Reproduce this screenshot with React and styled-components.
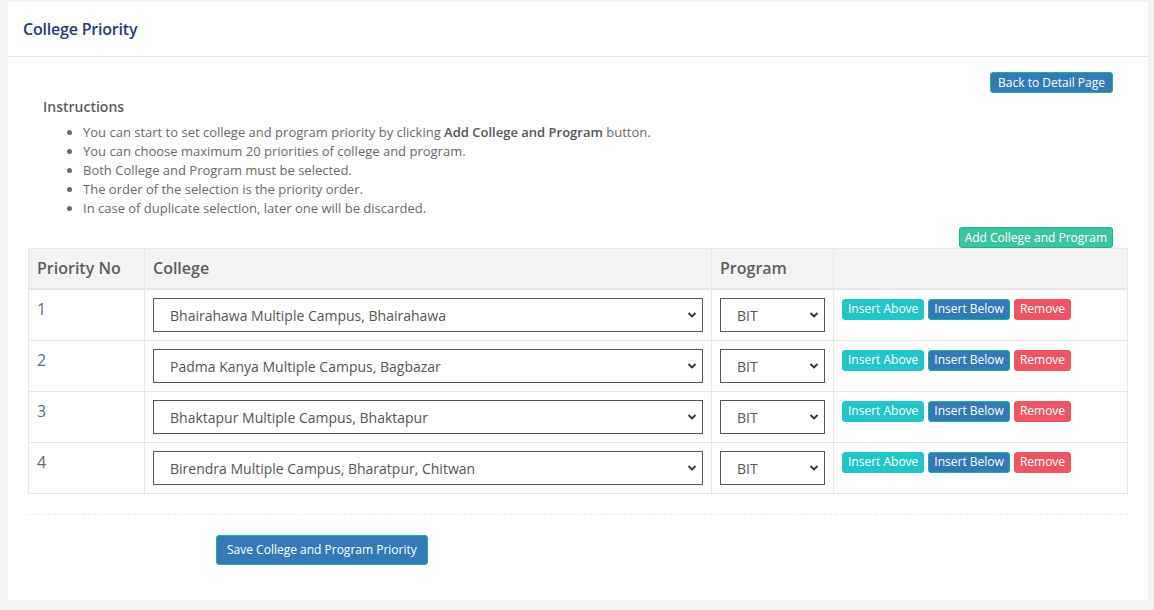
import React from "react";
import styled, { createGlobalStyle } from "styled-components";

const Global = createGlobalStyle`
  html, body { margin: 0; padding: 0; background: #f3f3f4; }
  body { font-family: "Open Sans", "Noto Sans", sans-serif; }
  * { box-sizing: border-box; }
`;

const Page = styled.div`
  padding: 2px 6px 10px 8px;
  height: 610px;
`;

const Card = styled.div`
  background: #fff;
  height: 598px;
  display: flex;
  flex-direction: column;
`;

const Header = styled.div`
  height: 55px;
  border-bottom: 1px solid #e7eaec;
  display: flex;
  align-items: center;
  padding: 0 15px;
`;

const Title = styled.h2`
  margin: 0;
  font-size: 16px;
  font-weight: 600;
  color: #283a7a;
  letter-spacing: -0.2px;
`;

const Body = styled.div`
  padding: 15px 20px 0 20px;
`;

const Inner = styled.div`
  padding: 0 15px;
`;

const RightRow = styled.div`
  display: flex;
  justify-content: flex-end;
`;

const Btn = styled.button`
  font-family: "Open Sans", "Noto Sans", sans-serif;
  font-size: 12px;
  line-height: 1;
  height: ${(p) => (p.$size === "md" ? "30px" : "21px")};
  padding: ${(p) => (p.$size === "md" ? "0 10px" : p.$pad || "0 5px")};
  border-radius: 3px;
  color: #fff;
  cursor: pointer;
  white-space: nowrap;
  background: ${(p) =>
    p.$variant === "primary"
      ? "#337ab7"
      : p.$variant === "success"
      ? "#3cc5a0"
      : p.$variant === "info"
      ? "#23c6c8"
      : "#ed5565"};
  border: 1px solid
    ${(p) =>
      p.$variant === "primary"
        ? "#1ab394"
        : p.$variant === "success"
        ? "#1ab394"
        : p.$variant === "info"
        ? "#23c6c8"
        : "#ed5565"};
`;

const InstrTitle = styled.h4`
  margin: 4px 0 0 0;
  font-size: 14px;
  font-weight: 600;
  color: #5e5e5e;
  line-height: 20px;
`;

const List = styled.ul`
  margin: 6px 0 0 0;
  padding-left: 40px;
  font-size: 13px;
  color: #676a6c;
  line-height: 19px;
  b { font-weight: 600; color: #555; }
`;

const AddRow = styled(RightRow)`
  margin-top: 9px;
`;

const Table = styled.table`
  width: 100%;
  border-collapse: collapse;
  border: 1px solid #e7e7e7;
`;

const Th = styled.th`
  background: #f3f3f3;
  text-align: left;
  font-size: 16px;
  font-weight: 600;
  color: #5e5e5e;
  height: 40px;
  padding: 0 8px;
  border: 1px solid #e7e7e7;
  border-bottom-width: 2px;
  width: ${(p) => p.$w || "auto"};
`;

const Td = styled.td`
  border: 1px solid #e7e7e7;
  padding: 8px;
  vertical-align: top;
  height: 51px;
`;

const Num = styled.div`
  font-size: 16px;
  color: #5c6b80;
  line-height: 22px;
`;

const SelectWrap = styled.div`
  position: relative;
  width: 100%;
`;

const Select = styled.select`
  appearance: none;
  -webkit-appearance: none;
  width: 100%;
  height: 34px;
  border: 1px solid #555;
  border-radius: 0;
  background: #fff;
  font-family: "Open Sans", "Noto Sans", sans-serif;
  font-size: 14px;
  color: #555;
  padding: 2px 26px 0 16px;
  outline: none;
`;

const Chevron = styled.svg`
  position: absolute;
  right: 6px;
  top: 13px;
  width: 10px;
  height: 8px;
  pointer-events: none;
`;

const Actions = styled.div`
  display: flex;
  gap: 4px;
  padding-top: 1px;
`;

const Divider = styled.hr`
  border: 0;
  border-top: 1px dashed #e7eaec;
  margin: 20px 0 20px 0;
`;

const SaveRow = styled.div`
  padding-left: 188px;
`;

const rows = [
  "Bhairahawa Multiple Campus, Bhairahawa",
  "Padma Kanya Multiple Campus, Bagbazar",
  "Bhaktapur Multiple Campus, Bhaktapur",
  "Birendra Multiple Campus, Bharatpur, Chitwan",
];

function Dropdown({ value }) {
  return (
    <SelectWrap>
      <Select defaultValue={value}>
        <option>{value}</option>
      </Select>
      <Chevron viewBox="0 0 10 8">
        <path d="M1.5 2 L5 5.5 L8.5 2" fill="none" stroke="#333" strokeWidth="1.8" />
      </Chevron>
    </SelectWrap>
  );
}

export default function App() {
  return (
    <Page>
      <Global />
      <Card>
        <Header>
          <Title>College Priority</Title>
        </Header>
        <Body>
          <Inner>
            <RightRow>
              <Btn $variant="primary" $pad="0 7px">Back to Detail Page</Btn>
            </RightRow>
            <InstrTitle>Instructions</InstrTitle>
            <List>
              <li>
                You can start to set college and program priority by clicking{" "}
                <b>Add College and Program</b> button.
              </li>
              <li>You can choose maximum 20 priorities of college and program.</li>
              <li>Both College and Program must be selected.</li>
              <li>The order of the selection is the priority order.</li>
              <li>In case of duplicate selection, later one will be discarded.</li>
            </List>
            <AddRow>
              <Btn $variant="success">Add College and Program</Btn>
            </AddRow>
          </Inner>
          <Table>
            <thead>
              <tr>
                <Th $w="116px">Priority No</Th>
                <Th $w="567px">College</Th>
                <Th $w="122px">Program</Th>
                <Th></Th>
              </tr>
            </thead>
            <tbody>
              {rows.map((c, i) => (
                <tr key={c}>
                  <Td>
                    <Num>{i + 1}</Num>
                  </Td>
                  <Td>
                    <Dropdown value={c} />
                  </Td>
                  <Td>
                    <Dropdown value="BIT" />
                  </Td>
                  <Td>
                    <Actions>
                      <Btn $variant="info">Insert Above</Btn>
                      <Btn $variant="primary">Insert Below</Btn>
                      <Btn $variant="danger">Remove</Btn>
                    </Actions>
                  </Td>
                </tr>
              ))}
            </tbody>
          </Table>
          <Divider />
          <SaveRow>
            <Btn $variant="primary" $size="md">
              Save College and Program Priority
            </Btn>
          </SaveRow>
        </Body>
      </Card>
    </Page>
  );
}
